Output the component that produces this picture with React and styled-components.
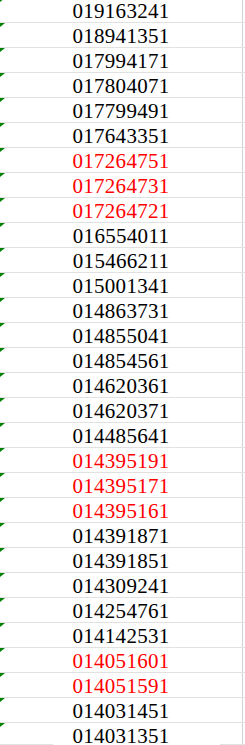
import React from "react";
import styled, { createGlobalStyle } from "styled-components";

const GlobalStyle = createGlobalStyle`
  html, body {
    margin: 0;
    padding: 0;
    background: #ffffff;
    overflow: hidden;
  }
`;

const Sheet = styled.div`
  position: relative;
  width: 245px;
  height: 745px;
  overflow: hidden;
  background: #ffffff;
`;

const Rows = styled.div`
  display: flex;
  flex-direction: column;
  margin-top: -2px;
`;

const Row = styled.div`
  display: flex;
  height: 24px;
  border-bottom: 1px solid #e1e1e1;
`;

const Cell = styled.div`
  position: relative;
  box-sizing: border-box;
  width: 243px;
  padding-top: 1px;
  border-right: 1px solid #d4d4d4;
  font-family: "Liberation Serif", "Times New Roman", serif;
  font-size: 21px;
  line-height: 24px;
  letter-spacing: 0.3px;
  text-align: center;
  color: ${(p) => (p.$red ? "#ff0000" : "#000000")};
`;

const TextFlag = styled.span`
  position: absolute;
  top: 0;
  left: 0;
  width: 5px;
  height: 4px;
  background: #008000;
  clip-path: polygon(0 0, 100% 0, 0 100%);
`;

const Spare = styled.div`
  flex: 1;
`;

const BottomEdge = styled.div`
  position: absolute;
  left: 0;
  right: 0;
  top: 744px;
  height: 1px;
  background: linear-gradient(
    to right,
    #e1e1e1 0,
    #e1e1e1 53px,
    transparent 53px,
    transparent 220px,
    #e1e1e1 220px
  );
`;

const values = [
  ["019163241"],
  ["018941351"],
  ["017994171"],
  ["017804071"],
  ["017799491"],
  ["017643351"],
  ["017264751", true],
  ["017264731", true],
  ["017264721", true],
  ["016554011"],
  ["015466211"],
  ["015001341"],
  ["014863731"],
  ["014855041"],
  ["014854561"],
  ["014620361"],
  ["014620371"],
  ["014485641"],
  ["014395191", true],
  ["014395171", true],
  ["014395161", true],
  ["014391871"],
  ["014391851"],
  ["014309241"],
  ["014254761"],
  ["014142531"],
  ["014051601", true],
  ["014051591", true],
  ["014031451"],
  ["014031351"],
];

export default function App() {
  return (
    <>
      <GlobalStyle />
      <Sheet>
        <Rows>
          {values.map(([v, red]) => (
            <Row key={v}>
              <Cell $red={red}>
                <TextFlag />
                {v}
              </Cell>
              <Spare />
            </Row>
          ))}
        </Rows>
        <BottomEdge />
      </Sheet>
    </>
  );
}
